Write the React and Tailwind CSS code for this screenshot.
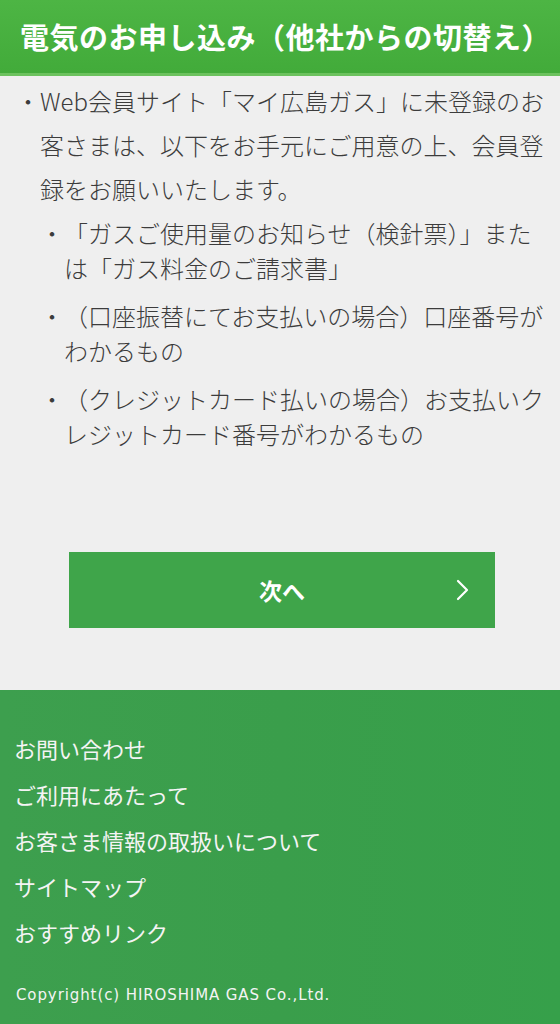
export default function App() {
  const jp = { fontFamily: '"Noto Sans CJK JP", "Noto Sans", sans-serif' };
  return (
    <div className="w-[560px] min-h-[1024px] bg-[#efefef] flex flex-col" style={jp}>
      <header className="h-[76px] bg-gradient-to-b from-[#4db544] to-[#42ab3a] border-b-[3px] border-[#6cc25e] flex items-center pl-[20px]">
        <h1 className="text-white font-bold text-[29px] leading-none tracking-[0.5px] whitespace-nowrap">電気のお申し込み（他社からの切替え）</h1>
      </header>

      <main className="pt-[3px] pl-[16px] pr-[10px] text-[#3c3c3c] text-[24px] font-light">
        <div className="flex leading-[44px]">
          <span className="w-[24px] shrink-0">・</span>
          <p>Web会員サイト「マイ広島ガス」に未登録のお客さまは、以下をお手元にご用意の上、会員登録をお願いいたします。</p>
        </div>
        <ul className="pl-[24px] mt-[4px] flex flex-col gap-[13px] leading-[35px]">
          <li className="flex">
            <span className="w-[24px] shrink-0">・</span>
            <span>「ガスご使用量のお知らせ（検針票）」または「ガス料金のご請求書」</span>
          </li>
          <li className="flex">
            <span className="w-[24px] shrink-0">・</span>
            <span>（口座振替にてお支払いの場合）口座番号がわかるもの</span>
          </li>
          <li className="flex">
            <span className="w-[24px] shrink-0">・</span>
            <span>（クレジットカード払いの場合）お支払いクレジットカード番号がわかるもの</span>
          </li>
        </ul>
      </main>

      <div className="mt-[101px] flex justify-center pl-[4px]">
        <button className="relative w-[426px] h-[76px] bg-[#3fa54a] text-white font-bold text-[23px] flex items-center justify-center">
          <span>次へ</span>
          <svg className="absolute right-[24px] top-1/2 -translate-y-1/2" width="16" height="24" viewBox="0 0 16 24" fill="none">
            <polyline points="3,3 12,12 3,21" stroke="white" strokeWidth="2.2" strokeLinecap="round" strokeLinejoin="round" />
          </svg>
        </button>
      </div>

      <footer className="mt-[62px] flex-1 bg-gradient-to-r from-[#3d9f4e] via-[#3a9e4b] to-[#36a04a] pt-[35px] pb-[20px] pl-[14px] text-[#f4f4f4]">
        <ul className="flex flex-col text-[22px] leading-[46px]">
          <li>お問い合わせ</li>
          <li>ご利用にあたって</li>
          <li>お客さま情報の取扱いについて</li>
          <li>サイトマップ</li>
          <li>おすすめリンク</li>
        </ul>
        <p className="mt-[30px] pl-[2px] text-[15px] tracking-[0.9px] leading-[20px]" style={{ fontFamily: '"DejaVu Sans", sans-serif' }}>Copyright(c) HIROSHIMA GAS Co.,Ltd.</p>
      </footer>
    </div>
  );
}
